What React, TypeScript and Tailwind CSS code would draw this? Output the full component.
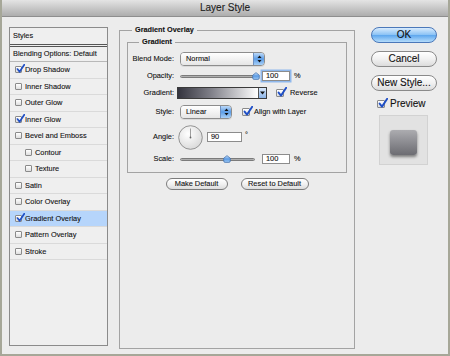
import React from "react";

function CheckBox({ checked, big }: { checked?: boolean; big?: boolean }) {
  return (
    <span
      className={
        "relative inline-block shrink-0 rounded-[1px] border border-[#8a8a8a] bg-gradient-to-b from-white to-[#dedede] " +
        (big ? "w-[8px] h-[8px]" : "w-[7px] h-[7px]")
      }
    >
      {checked && (
        <svg
          className={big ? "absolute left-[0px] top-[-3px] w-[10px] h-[10px]" : "absolute left-[-0.5px] top-[-3px] w-[9px] h-[9px]"}
          viewBox="0 0 10 10"
        >
          <path d="M1.6 5.6 L4 8.6 L9.2 0.8" stroke="#1f4fc6" strokeWidth="1.9" fill="none" strokeLinecap="round" strokeLinejoin="round" />
        </svg>
      )}
    </span>
  );
}

const items: { label: string; checked?: boolean; indent?: boolean; selected?: boolean }[] = [
  { label: "Drop Shadow", checked: true },
  { label: "Inner Shadow" },
  { label: "Outer Glow" },
  { label: "Inner Glow", checked: true },
  { label: "Bevel and Emboss" },
  { label: "Contour", indent: true },
  { label: "Texture", indent: true },
  { label: "Satin" },
  { label: "Color Overlay" },
  { label: "Gradient Overlay", checked: true, selected: true },
  { label: "Pattern Overlay" },
  { label: "Stroke" },
];

function LeftPanel() {
  return (
    <div className="mt-[2px] w-[99px] h-[319px] shrink-0 border border-[#8b8b8b] bg-[#efefef] flex flex-col text-[7.4px] leading-none">
      <div className="h-[19px] shrink-0 flex items-center pl-[3px] border-b-[3px] border-double border-[#555]">Styles</div>
      <div className="h-[15px] shrink-0 flex items-center pl-[3px] border-b border-[#b8b8b8]">Blending Options: Default</div>
      {items.map((it) => (
        <div
          key={it.label}
          className={
            "h-[16.5px] shrink-0 flex items-center border-b border-[#dadada] " +
            (it.indent ? "pl-[15px] " : "pl-[5px] ") +
            (it.selected ? "bg-[#b6d5fb]" : "")
          }
        >
          <CheckBox checked={it.checked} />
          <span className="ml-[3px]">{it.label}</span>
        </div>
      ))}
    </div>
  );
}

function Arrows() {
  return (
    <svg className="w-[5px] h-[8px]" viewBox="0 0 5 8">
      <path d="M0.5 3 L2.5 0.5 L4.5 3 Z" fill="#111" />
      <path d="M0.5 5 L2.5 7.5 L4.5 5 Z" fill="#111" />
    </svg>
  );
}

function Select({ value, width }: { value: string; width: string }) {
  return (
    <div className={"h-[14px] flex rounded-[4px] border border-[#8d8d8d] overflow-hidden shadow-[0_1px_0_rgba(0,0,0,0.08)] " + width}>
      <div className="flex-1 flex items-center pl-[5px] bg-gradient-to-b from-white to-[#e6e6e6] text-[7.4px] leading-none">{value}</div>
      <div className="w-[11px] flex items-center justify-center border-l border-[#6e8fbf] bg-gradient-to-b from-[#bcd9f8] via-[#5c9de6] to-[#a8d0f7]">
        <Arrows />
      </div>
    </div>
  );
}

function Slider({ width, pos }: { width: string; pos: number }) {
  return (
    <div className={"relative h-[10px] flex items-center " + width}>
      <div className="w-full h-[3px] rounded-full border border-[#7b7b7b] bg-gradient-to-b from-[#8f8f8f] to-[#d0d0d0]" />
      <svg className="absolute top-[1px] w-[8px] h-[8px]" style={{ left: pos - 4 }} viewBox="0 0 8 8">
        <defs>
          <linearGradient id={"g" + pos} x1="0" y1="0" x2="0" y2="1">
            <stop offset="0" stopColor="#cfe4fb" />
            <stop offset="0.5" stopColor="#5a9ae4" />
            <stop offset="1" stopColor="#9fcaf5" />
          </linearGradient>
        </defs>
        <path d="M4 0.6 L7.3 3.2 V6 Q7.3 7.4 5.9 7.4 H2.1 Q0.7 7.4 0.7 6 V3.2 Z" fill={"url(#g" + pos + ")"} stroke="#3d6aa6" strokeWidth="0.7" />
      </svg>
    </div>
  );
}

function Input({ value, width, focus }: { value: string; width: string; focus?: boolean }) {
  return (
    <div
      className={
        "h-[10px] bg-white border border-[#8c8c8c] flex items-center pl-[3px] text-[7.4px] leading-none " +
        width +
        (focus ? " ring-[1.5px] ring-[#8fb8ec]" : "")
      }
    >
      {value}
    </div>
  );
}

function Row({ label, h, children }: { label: string; h: string; children: React.ReactNode }) {
  return (
    <div className={"flex items-center " + h}>
      <span className="w-[46px] shrink-0 text-right text-[7.4px] leading-none">{label}</span>
      {children}
    </div>
  );
}

function PillButton({ label, width }: { label: string; width: string }) {
  return (
    <div
      className={
        "h-[12px] rounded-full border border-[#7c7c7c] bg-gradient-to-b from-white via-[#f2f2f2] to-[#dcdcdc] flex items-center justify-center text-[7.4px] leading-none " +
        width
      }
    >
      {label}
    </div>
  );
}

function Main() {
  return (
    <fieldset className="ml-[11px] w-[236px] h-[324px] shrink-0 border border-[#a3a3a3]">
      <legend className="ml-[12px] px-[3px] text-[7.3px] leading-[10px] font-bold">Gradient Overlay</legend>
      <fieldset className="mt-[2px] ml-[7px] w-[220px] h-[136px] border border-[#a3a3a3]">
        <legend className="ml-[11px] px-[3px] text-[7.3px] leading-[10px] font-bold">Gradient</legend>
        <div className="pt-[3px] flex flex-col">
          <Row label="Blend Mode:" h="h-[18px]">
            <div className="ml-[6px]">
              <Select value="Normal" width="w-[85px]" />
            </div>
          </Row>
          <Row label="Opacity:" h="h-[16px]">
            <div className="ml-[6px] flex items-center">
              <Slider width="w-[77px]" pos={76} />
              <div className="ml-[5px]">
                <Input value="100" width="w-[28px]" focus />
              </div>
              <span className="ml-[4px] text-[7.4px] leading-none">%</span>
            </div>
          </Row>
          <Row label="Gradient:" h="h-[18px]">
            <div className="ml-[3px] flex items-center">
              <div className="w-[90px] h-[12px] flex border border-[#3a3a3a]">
                <div className="flex-1 bg-[linear-gradient(to_right,#34343e,#7d7d86_40%,#ffffff)]" />
                <div className="w-[8px] border-l border-[#555] bg-gradient-to-b from-[#d9e8fa] to-[#8cb4e6] flex items-center justify-center">
                  <svg className="w-[5px] h-[4px]" viewBox="0 0 5 4">
                    <path d="M0 0.5 H5 L2.5 3.5 Z" fill="#111" />
                  </svg>
                </div>
              </div>
              <div className="ml-[9px] flex items-center">
                <CheckBox checked big />
                <span className="ml-[6px] text-[7.4px] leading-none">Reverse</span>
              </div>
            </div>
          </Row>
          <Row label="Style:" h="h-[20px]">
            <div className="ml-[6px] flex items-center">
              <Select value="Linear" width="w-[52px]" />
              <div className="ml-[10px] flex items-center">
                <CheckBox checked big />
                <span className="ml-[4px] text-[7.4px] leading-none">Align with Layer</span>
              </div>
            </div>
          </Row>
          <Row label="Angle:" h="h-[30px]">
            <div className="ml-[4px] flex items-center">
              <svg className="w-[25px] h-[25px]" viewBox="0 0 25 25">
                <defs>
                  <radialGradient id="dial" cx="0.4" cy="0.35" r="0.7">
                    <stop offset="0" stopColor="#ffffff" />
                    <stop offset="1" stopColor="#d8d8d8" />
                  </radialGradient>
                </defs>
                <circle cx="12.5" cy="12.5" r="11.8" fill="url(#dial)" stroke="#8a8a8a" strokeWidth="0.9" />
                <line x1="12.5" y1="12.5" x2="12.5" y2="3.5" stroke="#777" strokeWidth="0.7" />
                <circle cx="12.5" cy="12.5" r="0.9" fill="#666" />
              </svg>
              <div className="ml-[4px]">
                <Input value="90" width="w-[35px]" />
              </div>
              <span className="ml-[3px] self-start mt-[6px] text-[7.4px] leading-none">°</span>
            </div>
          </Row>
          <Row label="Scale:" h="h-[14px]">
            <div className="ml-[6px] flex items-center">
              <Slider width="w-[75px]" pos={47} />
              <div className="ml-[7px]">
                <Input value="100" width="w-[28px]" />
              </div>
              <span className="ml-[4px] text-[7.4px] leading-none">%</span>
            </div>
          </Row>
        </div>
      </fieldset>
      <div className="mt-[5px] flex justify-center gap-[13px]">
        <PillButton label="Make Default" width="w-[62px]" />
        <PillButton label="Reset to Default" width="w-[68px]" />
      </div>
    </fieldset>
  );
}

function Right() {
  return (
    <div className="ml-[16px] mt-[2px] w-[66px] shrink-0 flex flex-col">
      <div className="h-[16px] rounded-full border border-[#4b78b9] bg-[linear-gradient(to_bottom,#d8ebfd,#8cc3f5_48%,#5ea7ee_52%,#b4dcfb)] flex items-center justify-center text-[10px] leading-none text-[#111]">
        OK
      </div>
      <div className="mt-[8px] h-[16px] rounded-full border border-[#8a8a8a] bg-gradient-to-b from-white via-[#f1f1f1] to-[#dcdcdc] flex items-center justify-center text-[10px] leading-none">
        Cancel
      </div>
      <div className="mt-[8px] h-[16px] rounded-full border border-[#8a8a8a] bg-gradient-to-b from-white via-[#f1f1f1] to-[#dcdcdc] flex items-center justify-center text-[10px] leading-none">
        New Style...
      </div>
      <div className="mt-[8px] h-[9px] pl-[6px] flex items-center">
        <CheckBox checked big />
        <span className="ml-[5px] text-[10px] leading-none">Preview</span>
      </div>
      <div className="mt-[7px] ml-[8px] w-[49px] h-[50px] border border-[#d2d2d2] bg-[#e2e2e2] flex items-center justify-center pt-[5px]">
        <div className="w-[27px] h-[25px] rounded-[3px] bg-gradient-to-b from-[#acacb0] to-[#6c6c72] shadow-[0_2px_3px_rgba(0,0,0,0.45)]" />
      </div>
    </div>
  );
}

export default function App() {
  return (
    <div className="w-[450px] h-[356px] bg-[#ececec] border-x-2 border-b-2 border-[#a6a798] flex flex-col overflow-hidden font-['Liberation_Sans',Arial,sans-serif] text-[#111] [-webkit-text-stroke:0.1px_#111]">
      <div className="h-[17px] shrink-0 border-b border-[#8e8e8e] bg-gradient-to-b from-[#e4e4e4] to-[#adadad] flex items-center justify-center text-[10px] leading-none text-[#222]">
        Layer Style
      </div>
      <div className="flex items-start pl-[7px] pt-[8px]">
        <LeftPanel />
        <Main />
        <Right />
      </div>
    </div>
  );
}
